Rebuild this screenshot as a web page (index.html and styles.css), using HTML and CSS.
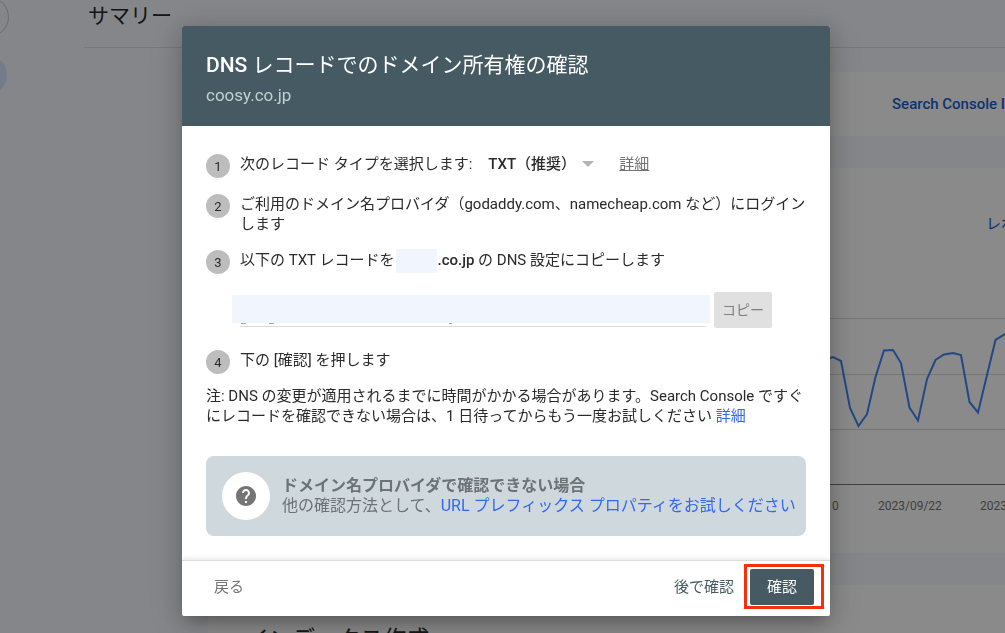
FILE: index.html
```html
<!DOCTYPE html>
<html lang="ja">
<head>
<meta charset="utf-8">
<meta name="viewport" content="width=device-width, initial-scale=1">
<title>DNS レコードでのドメイン所有権の確認</title>
<link rel="stylesheet" href="styles.css">
</head>
<body>
<div class="page">
  <nav class="rail">
    <span class="rail-ring"></span>
    <span class="rail-active"></span>
  </nav>
  <main class="main">
    <h1 class="page-title">サマリー</h1>
    <div class="cards">
      <section class="card insights"><a class="card-link" href="#">Search Console I</a></section>
      <section class="card performance">
        <a class="card-link report" href="#">レポ</a>
        <svg class="chart" viewBox="824 300 181 220" aria-hidden="true">
          <g stroke="#dadada" stroke-width="1">
            <path d="M824 318.500H1005M824 374.500H1005M824 429.500H1005"/>
            <path stroke="#757575" d="M824 484.500H1005"/>
          </g>
          <path fill="none" stroke="#4285f4" stroke-width="2" d="M824 366L830 358L833 357L841 361L850 408L858.500 426L867 414L875.500 377L884 350.500L893 350L901 363L909.500 407.500L918 420.500L927 379L935.500 360L944 354.500L953 353L961 355L969.500 402L978 412.500L987 375L995.500 340L1005 334"/>
          <g class="chart-text">
            <text x="832" y="510">0</text>
            <text x="878" y="510">2023/09/22</text>
            <text x="980" y="510">2023</text>
          </g>
        </svg>
      </section>
      <section class="card indexing"><h2 class="card-title">インデックス作成</h2></section>
    </div>
  </main>
</div>

<div class="overlay">
  <div class="dialog" role="dialog" aria-modal="true" aria-labelledby="dialog-title">
    <header class="dialog-header">
      <h2 class="dialog-title" id="dialog-title"><span class="medium">DNS</span> レコードでのドメイン所有権の確認</h2>
      <p class="domain">coosy.co.jp</p>
    </header>
    <div class="dialog-body">
      <div class="step">
        <span class="badge">1</span>
        <div class="step-text type-row">
          <label for="record-type">次のレコード タイプを選択します:</label>
          <span class="select-wrap">
            <select id="record-type" class="select"><option>TXT（推奨）</option></select>
            <svg class="caret" viewBox="0 0 12 6" aria-hidden="true"><path d="M0 0h12L6 6z" fill="#b4b4b4"/></svg>
          </span>
          <a class="detail" href="#">詳細</a>
        </div>
      </div>
      <div class="step">
        <span class="badge">2</span>
        <div class="step-text">ご利用のドメイン名プロバイダ（godaddy.com、namecheap.com など）にログインします</div>
      </div>
      <div class="step">
        <span class="badge">3</span>
        <div class="step-text">以下の TXT レコードを<span class="mask"></span><b class="medium">.co.jp</b> の DNS 設定にコピーします</div>
      </div>
      <div class="copy-row">
        <div class="record">
          <input class="record-input" type="text" readonly aria-label="TXT レコード">
          <svg class="record-line" aria-hidden="true">
            <path d="M1 0.500h5M29 0.500h5M209 0.500h3" stroke="#a5a5a5"/>
            <rect y="3" width="100%" height="1" fill="#dcdcdc"/>
          </svg>
        </div>
        <button class="copy" type="button">コピー</button>
      </div>
      <div class="step">
        <span class="badge">4</span>
        <div class="step-text">下の [確認] を押します</div>
      </div>
      <p class="note">注: DNS の変更が適用されるまでに時間がかかる場合があります。Search Console ですぐにレコードを確認できない場合は、1 日待ってからもう一度お試しください <a class="blue" href="#">詳細</a></p>
      <aside class="callout">
        <span class="callout-icon">
          <svg viewBox="0 0 24 24" width="24" height="24" aria-hidden="true"><path fill="#757575" d="M12 2C6.480 2 2 6.480 2 12s4.480 10 10 10 10-4.480 10-10S17.520 2 12 2zm1 17h-2v-2h2v2zm2.070-7.750l-.9.920C13.450 12.900 13 13.500 13 15h-2v-.5c0-1.100.45-2.100 1.170-2.830l1.240-1.260c.37-.36.590-.86.590-1.410 0-1.100-.9-2-2-2s-2 .9-2 2H8c0-2.210 1.790-4 4-4s4 1.790 4 4c0 .88-.36 1.680-.93 2.250z"/></svg>
        </span>
        <div class="callout-text">
          <strong>ドメイン名プロバイダで確認できない場合</strong>
          <span>他の確認方法として、<a class="blue" href="#">URL プレフィックス プロパティをお試しください</a></span>
        </div>
      </aside>
    </div>
    <footer class="dialog-footer">
      <button class="text-btn back" type="button">戻る</button>
      <button class="text-btn later" type="button">後で確認</button>
      <span class="highlight"><button class="confirm" type="button">確認</button></span>
    </footer>
  </div>
</div>
</body>
</html>
```

FILE: styles.css
```css
* { box-sizing: border-box; }

body {
  margin: 0;
  font-family: Roboto, "Noto Sans CJK JP", sans-serif;
  font-size: 15px;
  line-height: 20px;
  color: #2a2a2a;
  background: #f6f8fd;
}

h1, h2, p { margin: 0; font-weight: 400; }
a { text-decoration: none; }
button, input, select { font: inherit; }
.medium { font-weight: 500; }

/* Page behind the dialog */
.page { display: flex; height: 100vh; overflow: hidden; }
.rail { flex: none; width: 84px; }
.rail-ring, .rail-active {
  display: block;
  width: 40px;
  height: 40px;
  margin-left: -31px;
  border-radius: 50%;
}
.rail-ring { margin-top: -3px; border: 1px solid #c4c7cc; }
.rail-active { margin-top: 18px; margin-left: -33px; background: #d6e4ff; }
.main { flex: 1; min-width: 0; }
.page-title {
  height: 48px;
  padding: 2px 4px;
  border-bottom: 1px solid #dadce0;
  font-size: 21px;
  line-height: 28px;
}
.cards { display: grid; gap: 32px; padding: 24px 0 0 124px; }
.card { background: #fff; overflow: hidden; }
.insights { display: flex; justify-content: flex-end; align-items: center; height: 64px; }
.card-link { color: #1a5fd0; font-weight: 500; white-space: nowrap; }
.performance { display: flex; flex-direction: column; align-items: flex-end; padding: 46px 0 33px; }
.report { width: 19px; font-weight: 400; }
.chart { width: 181px; height: 220px; margin-top: 66px; }
.chart-text { font-size: 12px; fill: #757575; }
.indexing { padding: 41px 38px; }
.card-title { font-size: 23px; line-height: 28px; }

/* Dialog */
.overlay {
  position: fixed;
  inset: 0;
  display: flex;
  justify-content: center;
  align-items: flex-start;
  padding: 26px 0 16px 7px;
  background: rgba(0, 0, 0, 0.46);
}
.dialog {
  width: 100%;
  max-width: 648px;
  border-radius: 2px;
  overflow: hidden;
  background: #fff;
  box-shadow: 0 11px 15px -7px rgba(0, 0, 0, 0.2), 0 9px 38px 3px rgba(0, 0, 0, 0.14), 0 4px 20px 4px rgba(0, 0, 0, 0.12);
}
.dialog-header { padding: 24px 24px 16px; background: #455a62; color: #fff; }
.dialog-title { font-size: 21px; line-height: 30px; }
.domain { font-size: 17px; line-height: 30px; color: #c7ced0; }
.dialog-body { padding: 28px 24px 24px; }
.step { display: flex; gap: 10px; min-height: 24px; margin-bottom: 16px; }
.badge {
  flex: none;
  width: 24px;
  height: 24px;
  border-radius: 50%;
  background: #bdbdbd;
  font-size: 13px;
  line-height: 25px;
  text-align: center;
}
.type-row { display: flex; align-items: center; height: 20px; }
.select-wrap { display: flex; align-items: center; margin-left: 16px; }
.select {
  appearance: none;
  padding: 0;
  border: 0;
  background: none;
  color: inherit;
  font-weight: 500;
}
.caret { width: 12px; height: 6px; margin-left: 6px; }
.detail { margin-left: 25px; color: #757575; text-decoration: underline; }
.mask {
  display: inline-block;
  width: 41px;
  height: 24px;
  margin: -2px 0 -2px 2px;
  vertical-align: middle;
  background: #f1f5fd;
}
.copy-row { display: flex; gap: 4px; margin: 18px 34px 22px 26px; }
.record { flex: 1; display: flex; flex-direction: column; padding-top: 3px; }
.record-input {
  width: 100%;
  height: 28px;
  padding: 0 8px;
  border: 0;
  background: #f1f5fd;
}
.record-line { width: calc(100% - 12px); height: 4px; margin-left: 8px; }
.copy {
  width: 58px;
  height: 36px;
  padding: 0;
  border: 0;
  border-radius: 2px;
  background: #e0e0e0;
  color: #808080;
  font-size: 14px;
}
.note { margin-top: -4px; }
.blue { color: #3367f6; }
.callout {
  display: flex;
  align-items: center;
  gap: 12px;
  margin-top: 30px;
  padding: 16px 8px 16px 16px;
  border-radius: 8px;
  background: #cfd8dc;
  color: #6c7275;
  font-size: 16px;
}
.callout-icon {
  flex: none;
  display: grid;
  place-items: center;
  width: 48px;
  height: 48px;
  border-radius: 50%;
  background: #fff;
}
.callout-text { display: grid; white-space: nowrap; }
.dialog-footer {
  display: flex;
  align-items: center;
  height: 56px;
  padding: 0 6px 4px 24px;
  border-top: 1px solid #dcdcdc;
  box-shadow: 0 -2px 4px rgba(0, 0, 0, 0.08);
}
.text-btn { padding: 0 8px; border: 0; background: none; color: #757575; }
.later { margin-left: auto; margin-right: 2px; color: #455a62; }
.highlight { padding: 2px 7px 1px 3px; border: 3px solid #f4300f; }
.confirm {
  display: block;
  width: 64px;
  height: 36px;
  padding: 0;
  border: 0;
  border-radius: 2px;
  background: #455a62;
  color: #fff;
}
```
